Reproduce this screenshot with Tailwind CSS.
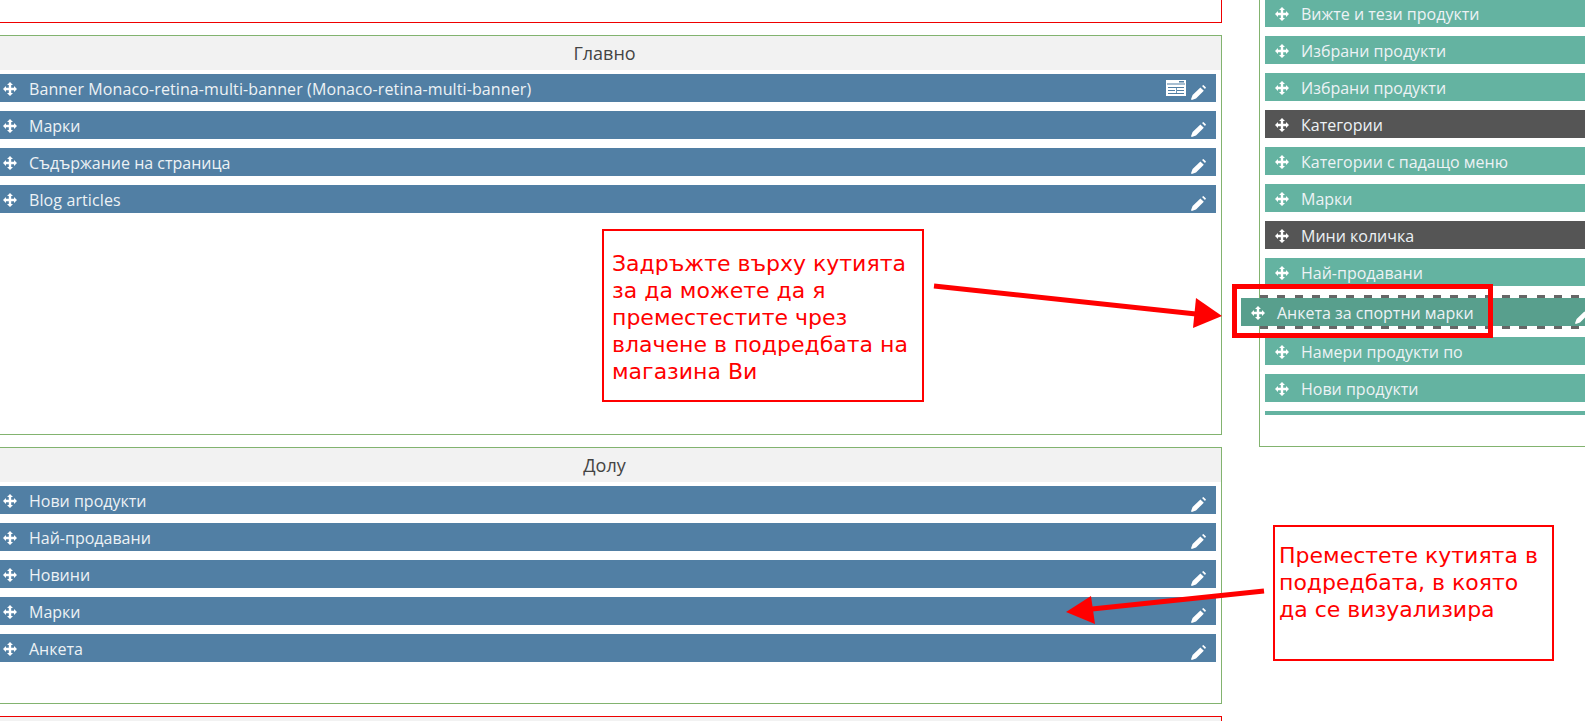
<!DOCTYPE html>
<html lang="bg">
<head>
    <meta charset="UTF-8">
    <meta name="viewport" content="width=device-width, initial-scale=1.0">
    <title>Подредба на магазина</title>
    <script src="https://cdn.jsdelivr.net/npm/@tailwindcss/browser@4"></script>
</head>
<body class="bg-white">
    <svg class="hidden">
        <symbol id="move" viewBox="0 0 14 14"><path fill="currentColor" d="M7 0 10 3H8.2V5.8H11V4L14 7 11 10V8.2H8.2V11H10L7 14 4 11H5.8V8.2H3V10L0 7 3 4V5.8H5.8V3H4Z"/></symbol>
        <symbol id="pencil" viewBox="0 0 15 15"><path fill="currentColor" d="M9.4 2.4 12.8 5.8 5 13.4 0.8 15 0 14.2 1.6 10ZM11 1 12.4 0 15 2.6 14 4Z"/></symbol>
    </svg>

    <div class="relative w-[1585px] h-[721px] overflow-hidden flex font-['Open_Sans',sans-serif] text-[16px] text-[#edf2f5]">
        <!-- layout positions -->
        <div class="w-[1235px] -ml-[13px] shrink-0">
            <div class="h-[23px] border-b border-r border-[#ee0000]"></div>

            <section class="mt-[12px] h-[400px] border border-[#82b36f] px-[5px] pb-0">
                <h2 class="-mx-[5px] h-[34px] mb-[4px] bg-[#f2f2f2] flex items-center justify-center text-[18px] text-[#444]">Главно</h2>
                <div class="flex flex-col gap-[9px]">
                    <div class="h-[28px] bg-[#517fa4] flex items-center pl-[10px]">
                        <svg class="w-[14px] h-[14px] mr-[12px] mt-[2px] text-white"><use href="#move"/></svg>
                        <span class="pt-[2px] tracking-[0.11px]">Banner Monaco-retina-multi-banner (Monaco-retina-multi-banner)</span>
                        <svg class="ml-auto mr-[5px] w-[20px] h-[16px]" viewBox="0 0 20 16"><path fill="#fff" d="M0 0H20V16H0Z"/><path fill="#517fa4" d="M1 3.5H19V4.5H1ZM2 7H18V8H2ZM2 10H9V11H2ZM11 10H18V11H11ZM2 13H18V14H2ZM10 8H10.8V14H10ZM13 1H18V2.4H13Z"/></svg>
                        <svg class="mr-[10px] w-[15px] h-[15px] mt-[8px] text-white"><use href="#pencil"/></svg>
                    </div>
                    <div class="h-[28px] bg-[#517fa4] flex items-center pl-[10px]">
                        <svg class="w-[14px] h-[14px] mr-[12px] mt-[2px] text-white"><use href="#move"/></svg>
                        <span class="pt-[2px]">Марки</span>
                        <svg class="ml-auto mr-[10px] w-[15px] h-[15px] mt-[8px] text-white"><use href="#pencil"/></svg>
                    </div>
                    <div class="h-[28px] bg-[#517fa4] flex items-center pl-[10px]">
                        <svg class="w-[14px] h-[14px] mr-[12px] mt-[2px] text-white"><use href="#move"/></svg>
                        <span class="pt-[2px]">Съдържание на страница</span>
                        <svg class="ml-auto mr-[10px] w-[15px] h-[15px] mt-[8px] text-white"><use href="#pencil"/></svg>
                    </div>
                    <div class="h-[28px] bg-[#517fa4] flex items-center pl-[10px]">
                        <svg class="w-[14px] h-[14px] mr-[12px] mt-[2px] text-white"><use href="#move"/></svg>
                        <span class="pt-[2px] tracking-[0.11px]">Blog articles</span>
                        <svg class="ml-auto mr-[10px] w-[15px] h-[15px] mt-[8px] text-white"><use href="#pencil"/></svg>
                    </div>
                </div>
            </section>

            <section class="mt-[12px] h-[257px] border border-[#82b36f] px-[5px]">
                <h2 class="-mx-[5px] h-[34px] mb-[4px] bg-[#f2f2f2] flex items-center justify-center text-[18px] text-[#444]">Долу</h2>
                <div class="flex flex-col gap-[9px]">
                    <div class="h-[28px] bg-[#517fa4] flex items-center pl-[10px]">
                        <svg class="w-[14px] h-[14px] mr-[12px] mt-[2px] text-white"><use href="#move"/></svg>
                        <span class="pt-[2px]">Нови продукти</span>
                        <svg class="ml-auto mr-[10px] w-[15px] h-[15px] mt-[8px] text-white"><use href="#pencil"/></svg>
                    </div>
                    <div class="h-[28px] bg-[#517fa4] flex items-center pl-[10px]">
                        <svg class="w-[14px] h-[14px] mr-[12px] mt-[2px] text-white"><use href="#move"/></svg>
                        <span class="pt-[2px]">Най-продавани</span>
                        <svg class="ml-auto mr-[10px] w-[15px] h-[15px] mt-[8px] text-white"><use href="#pencil"/></svg>
                    </div>
                    <div class="h-[28px] bg-[#517fa4] flex items-center pl-[10px]">
                        <svg class="w-[14px] h-[14px] mr-[12px] mt-[2px] text-white"><use href="#move"/></svg>
                        <span class="pt-[2px]">Новини</span>
                        <svg class="ml-auto mr-[10px] w-[15px] h-[15px] mt-[8px] text-white"><use href="#pencil"/></svg>
                    </div>
                    <div class="h-[28px] bg-[#517fa4] flex items-center pl-[10px]">
                        <svg class="w-[14px] h-[14px] mr-[12px] mt-[2px] text-white"><use href="#move"/></svg>
                        <span class="pt-[2px]">Марки</span>
                        <svg class="ml-auto mr-[10px] w-[15px] h-[15px] mt-[8px] text-white"><use href="#pencil"/></svg>
                    </div>
                    <div class="h-[28px] bg-[#517fa4] flex items-center pl-[10px]">
                        <svg class="w-[14px] h-[14px] mr-[12px] mt-[2px] text-white"><use href="#move"/></svg>
                        <span class="pt-[2px]">Анкета</span>
                        <svg class="ml-auto mr-[10px] w-[15px] h-[15px] mt-[8px] text-white"><use href="#pencil"/></svg>
                    </div>
                </div>
            </section>

            <div class="mt-[12px] h-[20px] border-t border-r border-[#ee0000] bg-[#f2f2f2]"></div>
        </div>

        <!-- available modules -->
        <div class="ml-[37px] w-[400px] shrink-0 -mt-px self-start border-l border-b border-[#82b36f] pl-[5px] pb-[31px]">
            <div class="flex flex-col">
                <div class="h-[28px] mb-[9px] bg-[#64b3a1] flex items-center pl-[10px]">
                    <svg class="w-[14px] h-[14px] mr-[12px] mt-[2px] text-white"><use href="#move"/></svg><span class="pt-[2px]">Вижте и тези продукти</span>
                </div>
                <div class="h-[28px] mb-[9px] bg-[#64b3a1] flex items-center pl-[10px]">
                    <svg class="w-[14px] h-[14px] mr-[12px] mt-[2px] text-white"><use href="#move"/></svg><span class="pt-[2px]">Избрани продукти</span>
                </div>
                <div class="h-[28px] mb-[9px] bg-[#64b3a1] flex items-center pl-[10px]">
                    <svg class="w-[14px] h-[14px] mr-[12px] mt-[2px] text-white"><use href="#move"/></svg><span class="pt-[2px]">Избрани продукти</span>
                </div>
                <div class="h-[28px] mb-[9px] bg-[#555555] flex items-center pl-[10px]">
                    <svg class="w-[14px] h-[14px] mr-[12px] mt-[2px] text-white"><use href="#move"/></svg><span class="pt-[2px]">Категории</span>
                </div>
                <div class="h-[28px] mb-[9px] bg-[#64b3a1] flex items-center pl-[10px]">
                    <svg class="w-[14px] h-[14px] mr-[12px] mt-[2px] text-white"><use href="#move"/></svg><span class="pt-[2px]">Категории с падащо меню</span>
                </div>
                <div class="h-[28px] mb-[9px] bg-[#64b3a1] flex items-center pl-[10px]">
                    <svg class="w-[14px] h-[14px] mr-[12px] mt-[2px] text-white"><use href="#move"/></svg><span class="pt-[2px]">Марки</span>
                </div>
                <div class="h-[28px] mb-[9px] bg-[#555555] flex items-center pl-[10px]">
                    <svg class="w-[14px] h-[14px] mr-[12px] mt-[2px] text-white"><use href="#move"/></svg><span class="pt-[2px]">Мини количка</span>
                </div>
                <div class="h-[28px] mb-[9px] bg-[#64b3a1] flex items-center pl-[10px]">
                    <svg class="w-[14px] h-[14px] mr-[12px] mt-[2px] text-white"><use href="#move"/></svg><span class="pt-[2px]">Най-продавани</span>
                </div>

                <!-- drop placeholder with the dragged row on top -->
                <div class="relative -ml-[5px] h-[34px] mb-[8px] flex flex-col justify-between">
                    <div class="h-[3px] bg-[repeating-linear-gradient(90deg,#666_0,#666_8px,transparent_8px,transparent_17.3px)]"></div>
                    <div class="h-[3px] bg-[repeating-linear-gradient(90deg,#666_0,#666_8px,transparent_8px,transparent_17.3px)]"></div>
                    <div class="absolute -left-[19px] top-[3px] w-[359px] h-[28px] bg-[#589f8d] flex items-center pl-[10px]">
                        <svg class="w-[14px] h-[14px] mr-[12px] mt-[2px] text-white"><use href="#move"/></svg><span class="pt-[2px]">Анкета за спортни марки</span>
                        <svg class="ml-auto mr-[10px] w-[15px] h-[15px] mt-[8px] text-white"><use href="#pencil"/></svg>
                    </div>
                </div>

                <div class="h-[28px] mb-[9px] bg-[#64b3a1] flex items-center pl-[10px]">
                    <svg class="w-[14px] h-[14px] mr-[12px] mt-[2px] text-white"><use href="#move"/></svg><span class="pt-[2px]">Намери продукти по</span>
                </div>
                <div class="h-[28px] mb-[9px] bg-[#64b3a1] flex items-center pl-[10px]">
                    <svg class="w-[14px] h-[14px] mr-[12px] mt-[2px] text-white"><use href="#move"/></svg><span class="pt-[2px]">Нови продукти</span>
                </div>
                <div class="h-[4px] bg-[#64b3a1]"></div>
            </div>
        </div>

        <!-- red annotations drawn over the screenshot -->
        <div class="absolute left-[1232px] top-[284px] w-[261px] h-[54px] border-[5px] border-[#ff0000]"></div>

        <div class="absolute left-[602px] top-[229px] w-[322px] h-[173px] border-2 border-[#ff0000] bg-white px-[8px] pt-[19px] font-['DejaVu_Sans',sans-serif] text-[22px] leading-[27px] text-[#ff0000]">
            Задръжте върху кутията<br>за да можете да я<br>преместестите чрез<br>влачене в подредбата на<br>магазина Ви
        </div>

        <div class="absolute left-[1273px] top-[525px] w-[281px] h-[136px] border-2 border-[#ff0000] bg-white px-[4px] pt-[15px] font-['DejaVu_Sans',sans-serif] text-[22px] leading-[27px] text-[#ff0000]">
            Преместете кутията в<br>подредбата, в която<br>да се визуализира
        </div>

        <svg class="absolute left-0 top-0 w-[1585px] h-[721px] pointer-events-none" viewBox="0 0 1585 721">
            <path d="M934 286 1196 314" stroke="#ff0000" stroke-width="5" fill="none"/>
            <path d="M1222 316 1196 298 1193 328Z" fill="#ff0000"/>
            <path d="M1264 591 1092 609" stroke="#ff0000" stroke-width="5" fill="none"/>
            <path d="M1066 612 1091 596 1095 624Z" fill="#ff0000"/>
        </svg>
    </div>
</body>
</html>
